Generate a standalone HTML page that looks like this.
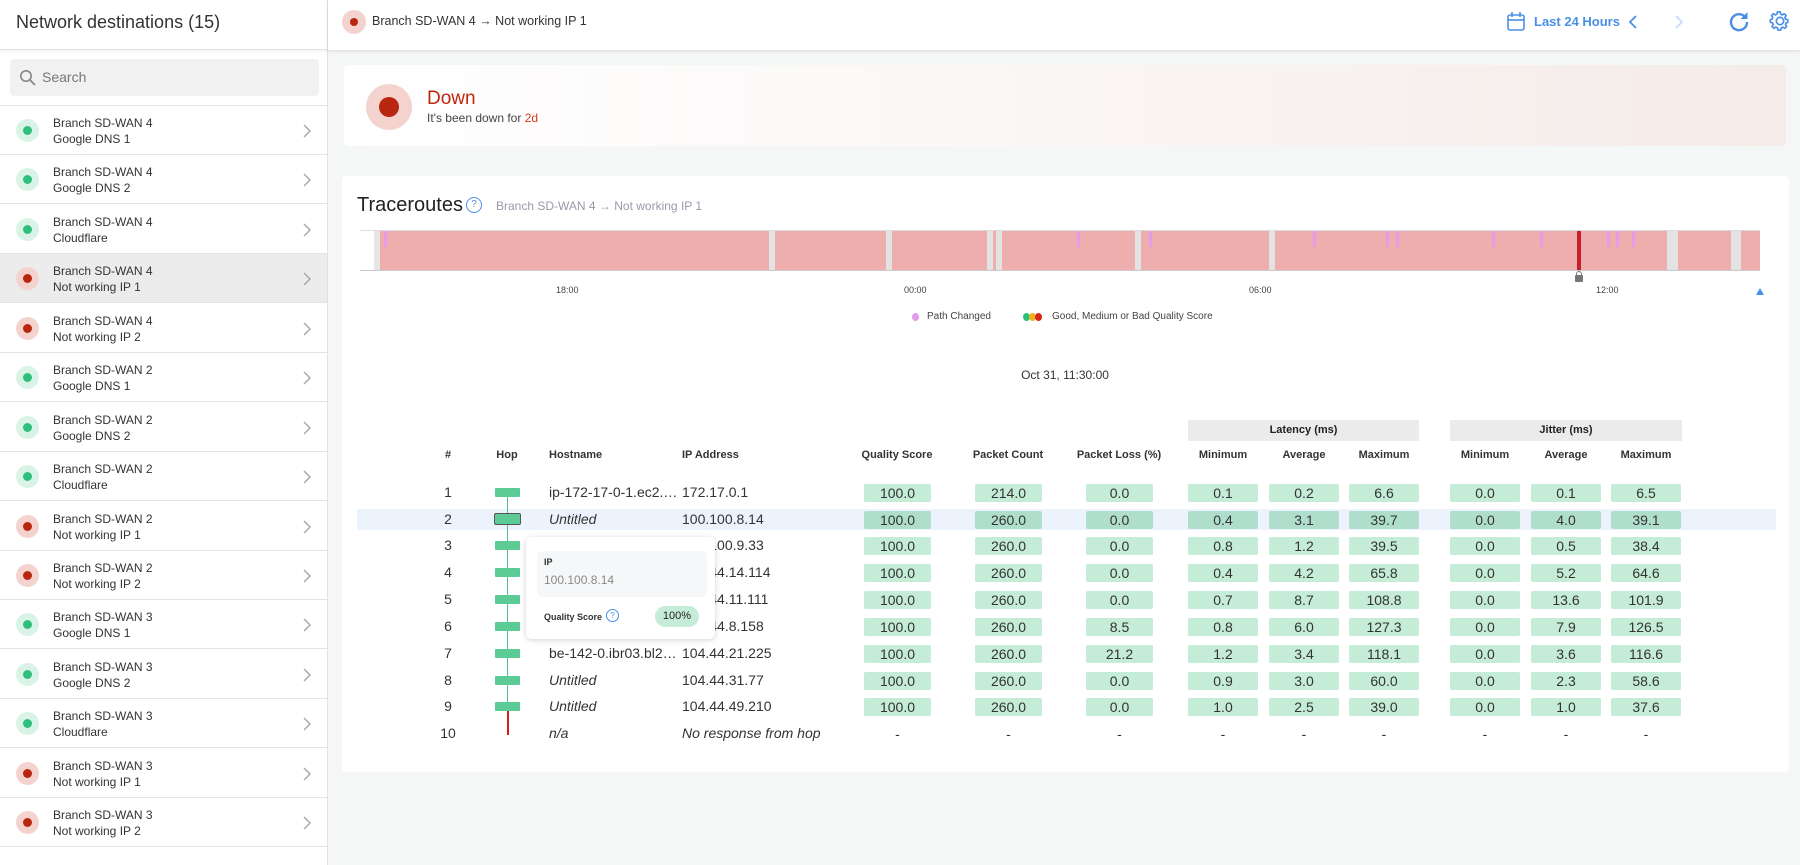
<!DOCTYPE html>
<html><head><meta charset="utf-8">
<style>
*{box-sizing:border-box;margin:0;padding:0}
body{width:1800px;height:865px;overflow:hidden;background:#f5f6f6;font-family:"Liberation Sans",sans-serif;color:#222;position:relative}
.abs{position:absolute}
#side{position:absolute;left:0;top:0;width:328px;height:865px;background:#fff;border-right:1px solid #e2e2e2}
#top{position:absolute;left:328px;top:0;width:1472px;height:50px;background:#fff;box-shadow:0 1px 3px rgba(0,0,0,.12)}
#sidehead{position:absolute;left:0;top:0;width:328px;height:50px;border-bottom:1px solid #e2e2e2;box-shadow:0 1px 3px rgba(0,0,0,.08)}
.item{position:absolute;left:0;width:327px;height:49px;border-bottom:1px solid #e4e4e4;font-size:12px;color:#333}
.item .t{position:absolute;left:53px;top:9px;line-height:16px}
.dot{position:absolute;left:16px;top:13px;width:23px;height:23px;border-radius:50%}
.dot i{position:absolute;left:7px;top:7px;width:9px;height:9px;border-radius:50%}
.g{background:#d9f4e6}.g i{background:#2fbf7c}
.r{background:#f4d3cf}.r i{background:#b8260f}
.chev{position:absolute;left:302px;top:17px}
.row{position:absolute;left:0;width:1800px;height:21px;font-size:14px;line-height:21px;color:#333}
.row>div{position:absolute;top:0}
.p{width:67px;height:18px;top:2px!important;line-height:18px;background:#c5ecd6;border-radius:2px;text-align:center;font-size:14px}
.w{width:70px}
.num{left:428px;width:40px;text-align:center}
.hn{left:549px;width:133px;white-space:nowrap;overflow:hidden}
.ip{left:682px;white-space:nowrap}
.k1{left:864px}.k2{left:975px}.k3{left:1086px}.k4{left:1188px}.k5{left:1269px}.k6{left:1349px}.k7{left:1450px}.k8{left:1531px}.k9{left:1611px}
.d{background:none}
.h{font-size:11px;font-weight:bold;color:#333;position:absolute;top:449px}
.hopr{position:absolute;left:495px;width:25px;height:9px;background:#5ccb95;border-radius:1px}
.gap{position:absolute;top:231px;height:39px;width:6px;background:#e3e3e3}
.pk{position:absolute;top:231px;height:16px;width:3px;background:#e49ce8}
.tk{position:absolute;top:285px;font-size:9px;color:#444}
.hl .p{background:#afdfcc}
</style></head><body>

<div id="side">
 <div id="sidehead"><div class="abs" style="left:16px;top:12px;font-size:18px;color:#333">Network destinations (15)</div></div>
 <div class="abs" style="left:10px;top:59px;width:309px;height:37px;background:#f1f1f1;border-radius:4px">
  <svg class="abs" style="left:9px;top:10px" width="18" height="18" viewBox="0 0 18 18"><circle cx="7" cy="7" r="5.2" fill="none" stroke="#888" stroke-width="1.6"/><line x1="11" y1="11" x2="16" y2="16" stroke="#888" stroke-width="1.8"/></svg>
  <div class="abs" style="left:32px;top:10px;font-size:14px;color:#777">Search</div>
 </div>
 <div class="abs" style="left:0;top:105px;width:327px;border-top:1px solid #e4e4e4"></div>

 <div class="item" style="top:106px"><div class="dot g"><i></i></div><div class="t">Branch SD-WAN 4<br>Google DNS 1</div><svg class="chev" width="10" height="16"><path d="M2 2l6 6-6 6" fill="none" stroke="#aaa" stroke-width="1.5"/></svg></div>
 <div class="item" style="top:155px"><div class="dot g"><i></i></div><div class="t">Branch SD-WAN 4<br>Google DNS 2</div><svg class="chev" width="10" height="16"><path d="M2 2l6 6-6 6" fill="none" stroke="#aaa" stroke-width="1.5"/></svg></div>
 <div class="item" style="top:205px"><div class="dot g"><i></i></div><div class="t">Branch SD-WAN 4<br>Cloudflare</div><svg class="chev" width="10" height="16"><path d="M2 2l6 6-6 6" fill="none" stroke="#aaa" stroke-width="1.5"/></svg></div>
 <div class="item" style="top:254px;background:#ececec"><div class="dot r"><i></i></div><div class="t">Branch SD-WAN 4<br>Not working IP 1</div><svg class="chev" width="10" height="16"><path d="M2 2l6 6-6 6" fill="none" stroke="#aaa" stroke-width="1.5"/></svg></div>
 <div class="item" style="top:304px"><div class="dot r"><i></i></div><div class="t">Branch SD-WAN 4<br>Not working IP 2</div><svg class="chev" width="10" height="16"><path d="M2 2l6 6-6 6" fill="none" stroke="#aaa" stroke-width="1.5"/></svg></div>
 <div class="item" style="top:353px"><div class="dot g"><i></i></div><div class="t">Branch SD-WAN 2<br>Google DNS 1</div><svg class="chev" width="10" height="16"><path d="M2 2l6 6-6 6" fill="none" stroke="#aaa" stroke-width="1.5"/></svg></div>
 <div class="item" style="top:403px"><div class="dot g"><i></i></div><div class="t">Branch SD-WAN 2<br>Google DNS 2</div><svg class="chev" width="10" height="16"><path d="M2 2l6 6-6 6" fill="none" stroke="#aaa" stroke-width="1.5"/></svg></div>
 <div class="item" style="top:452px"><div class="dot g"><i></i></div><div class="t">Branch SD-WAN 2<br>Cloudflare</div><svg class="chev" width="10" height="16"><path d="M2 2l6 6-6 6" fill="none" stroke="#aaa" stroke-width="1.5"/></svg></div>
 <div class="item" style="top:502px"><div class="dot r"><i></i></div><div class="t">Branch SD-WAN 2<br>Not working IP 1</div><svg class="chev" width="10" height="16"><path d="M2 2l6 6-6 6" fill="none" stroke="#aaa" stroke-width="1.5"/></svg></div>
 <div class="item" style="top:551px"><div class="dot r"><i></i></div><div class="t">Branch SD-WAN 2<br>Not working IP 2</div><svg class="chev" width="10" height="16"><path d="M2 2l6 6-6 6" fill="none" stroke="#aaa" stroke-width="1.5"/></svg></div>
 <div class="item" style="top:600px"><div class="dot g"><i></i></div><div class="t">Branch SD-WAN 3<br>Google DNS 1</div><svg class="chev" width="10" height="16"><path d="M2 2l6 6-6 6" fill="none" stroke="#aaa" stroke-width="1.5"/></svg></div>
 <div class="item" style="top:650px"><div class="dot g"><i></i></div><div class="t">Branch SD-WAN 3<br>Google DNS 2</div><svg class="chev" width="10" height="16"><path d="M2 2l6 6-6 6" fill="none" stroke="#aaa" stroke-width="1.5"/></svg></div>
 <div class="item" style="top:699px"><div class="dot g"><i></i></div><div class="t">Branch SD-WAN 3<br>Cloudflare</div><svg class="chev" width="10" height="16"><path d="M2 2l6 6-6 6" fill="none" stroke="#aaa" stroke-width="1.5"/></svg></div>
 <div class="item" style="top:749px"><div class="dot r"><i></i></div><div class="t">Branch SD-WAN 3<br>Not working IP 1</div><svg class="chev" width="10" height="16"><path d="M2 2l6 6-6 6" fill="none" stroke="#aaa" stroke-width="1.5"/></svg></div>
 <div class="item" style="top:798px"><div class="dot r"><i></i></div><div class="t">Branch SD-WAN 3<br>Not working IP 2</div><svg class="chev" width="10" height="16"><path d="M2 2l6 6-6 6" fill="none" stroke="#aaa" stroke-width="1.5"/></svg></div>
</div>

<div id="top">
 <div class="dot r" style="left:14px;top:10px;width:24px;height:24px"><i style="left:8px;top:8px;width:8px;height:8px"></i></div>
 <div class="abs" style="left:44px;top:14px;font-size:12.5px;color:#333;font-weight:500">Branch SD-WAN 4 → Not working IP 1</div>
 <svg class="abs" style="left:1178px;top:11px" width="20" height="21" viewBox="0 0 20 21"><rect x="2" y="4" width="16" height="15" rx="2" fill="none" stroke="#4a8fe7" stroke-width="1.6"/><line x1="2" y1="9" x2="18" y2="9" stroke="#4a8fe7" stroke-width="1.6"/><line x1="6" y1="1" x2="6" y2="6" stroke="#4a8fe7" stroke-width="1.6"/><line x1="14" y1="1" x2="14" y2="6" stroke="#4a8fe7" stroke-width="1.6"/></svg>
 <div class="abs" style="left:1206px;top:14px;font-size:13px;color:#4a8fe7;font-weight:bold">Last 24 Hours</div>
 <svg class="abs" style="left:1300px;top:14px" width="10" height="16"><path d="M8 2L2 8l6 6" fill="none" stroke="#4a8fe7" stroke-width="1.8"/></svg>
 <svg class="abs" style="left:1346px;top:14px" width="10" height="16"><path d="M2 2l6 6-6 6" fill="none" stroke="#c5daf6" stroke-width="1.8"/></svg>
 <svg class="abs" style="left:1400px;top:10px" width="22" height="22" viewBox="0 0 22 22"><path d="M17.5 7.5A8 8 0 1 0 19 12" fill="none" stroke="#4a8fe7" stroke-width="2.4"/><path d="M19.5 2v7h-7z" fill="#4a8fe7"/></svg>
 <svg class="abs" style="left:1441px;top:10px" width="22" height="22" viewBox="0 0 24 24"><path d="M12 8a4 4 0 1 0 0 8 4 4 0 0 0 0-8zm8.5 5.5v-3l-2.4-.5a6.8 6.8 0 0 0-.8-1.9l1.4-2-2.1-2.1-2 1.4a6.8 6.8 0 0 0-1.9-.8L12.200 2h-3l-.5 2.6a6.8 6.8 0 0 0-1.900.8l-2-1.4-2.1 2.1 1.4 2a6.8 6.8 0 0 0-.8 1.9L1.5 10.5v3l2.4.5c.2.7.4 1.3.8 1.9l-1.4 2 2.1 2.1 2-1.4c.6.4 1.2.6 1.9.8l.5 2.6h3l.5-2.6c.7-.2 1.3-.4 1.9-.8l2 1.4 2.1-2.1-1.4-2c.4-.6.6-1.2.8-1.9z" fill="none" stroke="#4a8fe7" stroke-width="1.8" stroke-linejoin="round"/></svg>
</div>

<div class="abs" style="left:344px;top:65px;width:1442px;height:81px;background:linear-gradient(90deg,#fff 0%,#fbf8f7 40%,#f5ebe8 100%);border-radius:4px"></div>
<div class="abs" style="left:366px;top:84px;width:46px;height:46px;border-radius:50%;background:#f4d3cf"></div>
<div class="abs" style="left:379px;top:97px;width:20px;height:20px;border-radius:50%;background:#b8260f"></div>
<div class="abs" style="left:427px;top:88px;font-size:19px;color:#c0260e">Down</div>
<div class="abs" style="left:427px;top:111px;font-size:12px;color:#444">It's been down for <span style="color:#d9381e">2d</span></div>

<div class="abs" style="left:342px;top:176px;width:1447px;height:596px;background:#fff;border-radius:4px"></div>
<div class="abs" style="left:357px;top:194px;font-size:20px;color:#222">Traceroutes</div>
<div class="abs" style="left:466px;top:197px;width:16px;height:16px;border:1.4px solid #4a8fe7;border-radius:50%;font-size:10px;color:#4a8fe7;text-align:center;line-height:14px">?</div>
<div class="abs" style="left:496px;top:199px;font-size:12px;color:#99a">Branch SD-WAN 4 → Not working IP 1</div>

<div class="abs" style="left:360px;top:230px;width:1400px;height:1px;background:#ddd"></div>
<div class="abs" style="left:360px;top:270px;width:1400px;height:1px;background:#ccc"></div>
<div class="abs" style="left:375px;top:231px;width:1385px;height:39px;background:#eeaeae"></div>
<div class="abs" style="left:374px;top:231px;width:6px;height:39px;background:#e6e6e6"></div>
<div class="gap" style="left:769px"></div><div class="gap" style="left:886px"></div><div class="gap" style="left:987px"></div><div class="gap" style="left:996px"></div><div class="gap" style="left:1135px"></div><div class="gap" style="left:1269px"></div><div class="gap" style="left:1667px;width:11px"></div><div class="gap" style="left:1731px;width:10px"></div>
<div class="pk" style="left:384px"></div><div class="pk" style="left:1077px"></div><div class="pk" style="left:1149px"></div><div class="pk" style="left:1313px"></div><div class="pk" style="left:1386px"></div><div class="pk" style="left:1396px"></div><div class="pk" style="left:1492px"></div><div class="pk" style="left:1540px"></div><div class="pk" style="left:1607px"></div><div class="pk" style="left:1616px"></div><div class="pk" style="left:1632px"></div>
<div class="abs" style="left:1577px;top:231px;width:4px;height:39px;background:#c8202a"></div>
<div class="abs" style="left:1575px;top:275px;width:8px;height:7px;background:#777;border-radius:1px"></div>
<div class="abs" style="left:1576px;top:271px;width:6px;height:6px;border:1.5px solid #777;border-bottom:none;border-radius:3px 3px 0 0"></div>
<div class="tk" style="left:556px">18:00</div><div class="tk" style="left:904px">00:00</div><div class="tk" style="left:1249px">06:00</div><div class="tk" style="left:1596px">12:00</div>
<div class="abs" style="left:1756px;top:288px;width:0;height:0;border-left:4px solid transparent;border-right:4px solid transparent;border-bottom:7px solid #4a8fe7"></div>
<div class="abs" style="left:912px;top:313px;width:7px;height:8px;border-radius:50%;background:#e49ce8"></div>
<div class="abs" style="left:927px;top:311px;font-size:10px;color:#444">Path Changed</div>
<div class="abs" style="left:1023px;top:313px;width:7px;height:8px;border-radius:50%;background:#2fbf7c"></div>
<div class="abs" style="left:1029px;top:313px;width:7px;height:8px;border-radius:50%;background:#f2b21c"></div>
<div class="abs" style="left:1035px;top:313px;width:7px;height:8px;border-radius:50%;background:#d7261b"></div>
<div class="abs" style="left:1052px;top:311px;font-size:10px;color:#444">Good, Medium or Bad Quality Score</div>
<div class="abs" style="left:1000px;top:368px;width:130px;text-align:center;font-size:12px;color:#333">Oct 31, 11:30:00</div>

<div class="abs" style="left:1188px;top:420px;width:231px;height:21px;background:#ebebeb;font-size:11px;font-weight:bold;text-align:center;line-height:21px">Latency (ms)</div>
<div class="abs" style="left:1450px;top:420px;width:232px;height:21px;background:#ebebeb;font-size:11px;font-weight:bold;text-align:center;line-height:21px">Jitter (ms)</div>

<div class="h" style="left:428px;width:40px;text-align:center">#</div>
<div class="h" style="left:487px;width:40px;text-align:center">Hop</div>
<div class="h" style="left:549px">Hostname</div>
<div class="h" style="left:682px">IP Address</div>
<div class="h" style="left:847px;width:100px;text-align:center">Quality Score</div>
<div class="h" style="left:958px;width:100px;text-align:center">Packet Count</div>
<div class="h" style="left:1064px;width:110px;text-align:center">Packet Loss (%)</div>
<div class="h" style="left:1188px;width:70px;text-align:center">Minimum</div>
<div class="h" style="left:1269px;width:70px;text-align:center">Average</div>
<div class="h" style="left:1349px;width:70px;text-align:center">Maximum</div>
<div class="h" style="left:1450px;width:70px;text-align:center">Minimum</div>
<div class="h" style="left:1531px;width:70px;text-align:center">Average</div>
<div class="h" style="left:1611px;width:70px;text-align:center">Maximum</div>

<div class="abs" style="left:357px;top:509px;width:1419px;height:21px;background:#ecf3fc"></div>

<div class="abs" style="left:507px;top:493px;width:1px;height:218px;background:#4fc08a"></div>
<div class="abs" style="left:507px;top:711px;width:1.5px;height:24px;background:#d52020"></div>

<div class="row" style="top:482px"><div class="num">1</div><div class="hn">ip-172-17-0-1.ec2.…</div><div class="ip">172.17.0.1</div><div class="p k1">100.0</div><div class="p k2">214.0</div><div class="p k3">0.0</div><div class="p w k4">0.1</div><div class="p w k5">0.2</div><div class="p w k6">6.6</div><div class="p w k7">0.0</div><div class="p w k8">0.1</div><div class="p w k9">6.5</div></div>
<div class="row hl" style="top:509px"><div class="num">2</div><div class="hn"><i>Untitled</i></div><div class="ip">100.100.8.14</div><div class="p k1">100.0</div><div class="p k2">260.0</div><div class="p k3">0.0</div><div class="p w k4">0.4</div><div class="p w k5">3.1</div><div class="p w k6">39.7</div><div class="p w k7">0.0</div><div class="p w k8">4.0</div><div class="p w k9">39.1</div></div>
<div class="row" style="top:535px"><div class="num">3</div><div class="hn"><i>Untitled</i></div><div class="ip">100.100.9.33</div><div class="p k1">100.0</div><div class="p k2">260.0</div><div class="p k3">0.0</div><div class="p w k4">0.8</div><div class="p w k5">1.2</div><div class="p w k6">39.5</div><div class="p w k7">0.0</div><div class="p w k8">0.5</div><div class="p w k9">38.4</div></div>
<div class="row" style="top:562px"><div class="num">4</div><div class="hn"><i>Untitled</i></div><div class="ip">104.44.14.114</div><div class="p k1">100.0</div><div class="p k2">260.0</div><div class="p k3">0.0</div><div class="p w k4">0.4</div><div class="p w k5">4.2</div><div class="p w k6">65.8</div><div class="p w k7">0.0</div><div class="p w k8">5.2</div><div class="p w k9">64.6</div></div>
<div class="row" style="top:589px"><div class="num">5</div><div class="hn"><i>Untitled</i></div><div class="ip">104.44.11.111</div><div class="p k1">100.0</div><div class="p k2">260.0</div><div class="p k3">0.0</div><div class="p w k4">0.7</div><div class="p w k5">8.7</div><div class="p w k6">108.8</div><div class="p w k7">0.0</div><div class="p w k8">13.6</div><div class="p w k9">101.9</div></div>
<div class="row" style="top:616px"><div class="num">6</div><div class="hn"><i>Untitled</i></div><div class="ip">104.44.8.158</div><div class="p k1">100.0</div><div class="p k2">260.0</div><div class="p k3">8.5</div><div class="p w k4">0.8</div><div class="p w k5">6.0</div><div class="p w k6">127.3</div><div class="p w k7">0.0</div><div class="p w k8">7.9</div><div class="p w k9">126.5</div></div>
<div class="row" style="top:643px"><div class="num">7</div><div class="hn">be-142-0.ibr03.bl2…</div><div class="ip">104.44.21.225</div><div class="p k1">100.0</div><div class="p k2">260.0</div><div class="p k3">21.2</div><div class="p w k4">1.2</div><div class="p w k5">3.4</div><div class="p w k6">118.1</div><div class="p w k7">0.0</div><div class="p w k8">3.6</div><div class="p w k9">116.6</div></div>
<div class="row" style="top:670px"><div class="num">8</div><div class="hn"><i>Untitled</i></div><div class="ip">104.44.31.77</div><div class="p k1">100.0</div><div class="p k2">260.0</div><div class="p k3">0.0</div><div class="p w k4">0.9</div><div class="p w k5">3.0</div><div class="p w k6">60.0</div><div class="p w k7">0.0</div><div class="p w k8">2.3</div><div class="p w k9">58.6</div></div>
<div class="row" style="top:696px"><div class="num">9</div><div class="hn"><i>Untitled</i></div><div class="ip">104.44.49.210</div><div class="p k1">100.0</div><div class="p k2">260.0</div><div class="p k3">0.0</div><div class="p w k4">1.0</div><div class="p w k5">2.5</div><div class="p w k6">39.0</div><div class="p w k7">0.0</div><div class="p w k8">1.0</div><div class="p w k9">37.6</div></div>
<div class="row" style="top:723px"><div class="num">10</div><div class="hn"><i>n/a</i></div><div class="ip"><i>No response from hop</i></div><div class="p d k1">-</div><div class="p d k2">-</div><div class="p d k3">-</div><div class="p d w k4">-</div><div class="p d w k5">-</div><div class="p d w k6">-</div><div class="p d w k7">-</div><div class="p d w k8">-</div><div class="p d w k9">-</div></div>

<div class="hopr" style="top:488px"></div>
<div class="hopr" style="top:513px;left:494px;width:27px;height:12px;border:1.5px solid #555;border-radius:2px"></div>
<div class="hopr" style="top:541px"></div><div class="hopr" style="top:568px"></div><div class="hopr" style="top:595px"></div><div class="hopr" style="top:622px"></div><div class="hopr" style="top:649px"></div><div class="hopr" style="top:676px"></div><div class="hopr" style="top:702px"></div>

<div class="abs" style="left:526px;top:537px;width:189px;height:102px;background:#fff;border-radius:6px;box-shadow:0 1px 6px rgba(0,0,0,.18)">
 <div class="abs" style="left:11px;top:14px;width:170px;height:46px;background:#f6f7f8;border-radius:6px"></div>
 <div class="abs" style="left:18px;top:20px;font-size:9px;font-weight:bold;color:#333">IP</div>
 <div class="abs" style="left:18px;top:36px;font-size:12px;color:#888">100.100.8.14</div>
 <div class="abs" style="left:18px;top:75px;font-size:9px;font-weight:bold;color:#333">Quality Score</div>
 <div class="abs" style="left:80px;top:72px;width:13px;height:13px;border:1.2px solid #4a8fe7;border-radius:50%;font-size:8px;color:#4a8fe7;text-align:center;line-height:11px">?</div>
 <div class="abs" style="left:129px;top:69px;width:44px;height:21px;background:#c5ecd6;border-radius:11px;font-size:11px;text-align:center;line-height:21px">100%</div>
</div>
</body></html>
